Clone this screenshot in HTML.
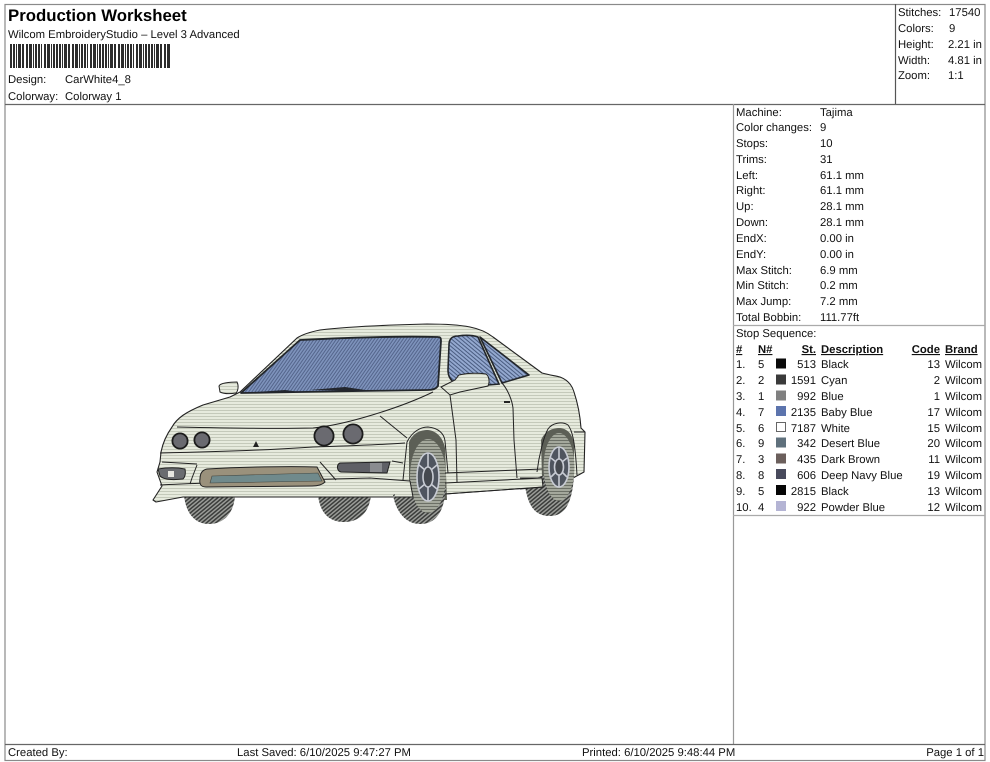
<!DOCTYPE html>
<html><head><meta charset="utf-8">
<style>
html,body{margin:0;padding:0;background:#fff;width:990px;height:762px;overflow:hidden}
svg{display:block;filter:blur(.3px)}
text{font-family:"Liberation Sans",sans-serif;font-size:11.3px;fill:#111;text-rendering:geometricPrecision}
.b{font-weight:bold;text-decoration:underline}
.r{text-anchor:end}
</style></head><body>
<svg width="990" height="762" viewBox="0 0 990 762" xmlns="http://www.w3.org/2000/svg">
<defs>
<filter id="soft" x="-5%" y="-5%" width="110%" height="110%"><feGaussianBlur stdDeviation=".35"/></filter>
<pattern id="body" width="3" height="3" patternUnits="userSpaceOnUse">
<rect width="3" height="3" fill="#e6eadd"/><rect y="2" width="3" height="1" fill="#c4c9ba"/>
</pattern>
<pattern id="glass" width="2.6" height="2.6" patternUnits="userSpaceOnUse" patternTransform="rotate(-55)">
<rect width="2.6" height="2.6" fill="#7f94bd"/><rect y="1.6" width="2.6" height="1" fill="#52648a"/>
</pattern>
<pattern id="glass2" width="3" height="3" patternUnits="userSpaceOnUse" patternTransform="rotate(40)">
<rect width="3" height="3" fill="#93a8cf"/><rect y="2" width="3" height="1" fill="#4a5b80"/>
</pattern>
<pattern id="tire" width="3" height="3" patternUnits="userSpaceOnUse" patternTransform="rotate(-40)">
<rect width="3" height="3" fill="#9a9c98"/><rect y="1.5" width="3" height="1.5" fill="#3a3c3a"/>
</pattern>
<pattern id="tire2" width="3" height="3" patternUnits="userSpaceOnUse">
<rect width="3" height="3" fill="#a4a89c"/><rect y="2" width="3" height="1" fill="#6c7066"/>
</pattern>
</defs>

<!-- frame -->
<g stroke="#8a8a8a" stroke-width="1.2" fill="none">
<rect x="5" y="4.5" width="980" height="756"/>
<line x1="5" y1="104.5" x2="985" y2="104.5" stroke="#666"/>
<line x1="895.5" y1="4" x2="895.5" y2="104" stroke="#555"/>
<line x1="733.5" y1="104" x2="733.5" y2="744" stroke="#999"/>
<line x1="5" y1="744.5" x2="985" y2="744.5" stroke="#666"/>
<line x1="733" y1="325.5" x2="985" y2="325.5" stroke="#aaa"/>
<line x1="733" y1="515.5" x2="985" y2="515.5" stroke="#aaa"/>
</g>

<!-- header -->
<text x="8" y="21" style="font-size:16.8px;font-weight:bold;fill:#000">Production Worksheet</text>
<text x="8" y="38">Wilcom EmbroideryStudio – Level 3 Advanced</text>
<line x1="10" y1="56" x2="170" y2="56" stroke="#2c2c2c" stroke-width="24" stroke-dasharray="2 1 2 1 1 1 3 1 2 2 2 1 3 1 1 1 2 1 2 1 1 2 2 1 3 1 1 1 2 1"/>
<text x="8" y="83">Design:</text><text x="65" y="83">CarWhite4_8</text>
<text x="8" y="100">Colorway:</text><text x="65" y="100">Colorway 1</text>

<text x="898" y="16">Stitches:</text><text x="949" y="16">17540</text>
<text x="898" y="32">Colors:</text><text x="949" y="32">9</text>
<text x="898" y="48">Height:</text><text x="948" y="48">2.21 in</text>
<text x="898" y="64">Width:</text><text x="948" y="64">4.81 in</text>
<text x="898" y="79">Zoom:</text><text x="948" y="79">1:1</text>

<!-- machine info -->
<text x="736" y="116">Machine:</text><text x="820" y="116">Tajima</text>
<text x="736" y="131">Color changes:</text><text x="820" y="131">9</text>
<text x="736" y="147">Stops:</text><text x="820" y="147">10</text>
<text x="736" y="163">Trims:</text><text x="820" y="163">31</text>
<text x="736" y="179">Left:</text><text x="820" y="179">61.1 mm</text>
<text x="736" y="194">Right:</text><text x="820" y="194">61.1 mm</text>
<text x="736" y="210">Up:</text><text x="820" y="210">28.1 mm</text>
<text x="736" y="226">Down:</text><text x="820" y="226">28.1 mm</text>
<text x="736" y="242">EndX:</text><text x="820" y="242">0.00 in</text>
<text x="736" y="258">EndY:</text><text x="820" y="258">0.00 in</text>
<text x="736" y="274">Max Stitch:</text><text x="820" y="274">6.9 mm</text>
<text x="736" y="289">Min Stitch:</text><text x="820" y="289">0.2 mm</text>
<text x="736" y="305">Max Jump:</text><text x="820" y="305">7.2 mm</text>
<text x="736" y="321">Total Bobbin:</text><text x="820" y="321">111.77ft</text>
<text x="736" y="337">Stop Sequence:</text>

<!-- table head -->
<text x="736" y="353" class="b">#</text><text x="758" y="353" class="b">N#</text>
<text x="816" y="353" class="b r">St.</text><text x="821" y="353" class="b">Description</text>
<text x="940" y="353" class="b r">Code</text><text x="945" y="353" class="b">Brand</text>

<g>
<text x="736" y="368">1.</text><text x="758" y="368">5</text><rect x="776" y="358.5" width="10" height="10" fill="#0a0a0a"/><text x="816" y="368" class="r">513</text><text x="821" y="368">Black</text><text x="940" y="368" class="r">13</text><text x="945" y="368">Wilcom</text>
<text x="736" y="384">2.</text><text x="758" y="384">2</text><rect x="776" y="374.5" width="10" height="10" fill="#3a3a3a"/><text x="816" y="384" class="r">1591</text><text x="821" y="384">Cyan</text><text x="940" y="384" class="r">2</text><text x="945" y="384">Wilcom</text>
<text x="736" y="400">3.</text><text x="758" y="400">1</text><rect x="776" y="390.5" width="10" height="10" fill="#808080"/><text x="816" y="400" class="r">992</text><text x="821" y="400">Blue</text><text x="940" y="400" class="r">1</text><text x="945" y="400">Wilcom</text>
<text x="736" y="416">4.</text><text x="758" y="416">7</text><rect x="776" y="406" width="10" height="10" fill="#5c74ad"/><text x="816" y="416" class="r">2135</text><text x="821" y="416">Baby Blue</text><text x="940" y="416" class="r">17</text><text x="945" y="416">Wilcom</text>
<text x="736" y="432">5.</text><text x="758" y="432">6</text><rect x="776.5" y="422.5" width="9" height="9" fill="#fff" stroke="#666"/><text x="816" y="432" class="r">7187</text><text x="821" y="432">White</text><text x="940" y="432" class="r">15</text><text x="945" y="432">Wilcom</text>
<text x="736" y="447">6.</text><text x="758" y="447">9</text><rect x="776" y="437.5" width="10" height="10" fill="#5f707c"/><text x="816" y="447" class="r">342</text><text x="821" y="447">Desert Blue</text><text x="940" y="447" class="r">20</text><text x="945" y="447">Wilcom</text>
<text x="736" y="463">7.</text><text x="758" y="463">3</text><rect x="776" y="453.5" width="10" height="10" fill="#6b5f5c"/><text x="816" y="463" class="r">435</text><text x="821" y="463">Dark Brown</text><text x="940" y="463" class="r">11</text><text x="945" y="463">Wilcom</text>
<text x="736" y="479">8.</text><text x="758" y="479">8</text><rect x="776" y="469" width="10" height="10" fill="#484a5c"/><text x="816" y="479" class="r">606</text><text x="821" y="479">Deep Navy Blue</text><text x="940" y="479" class="r">19</text><text x="945" y="479">Wilcom</text>
<text x="736" y="495">9.</text><text x="758" y="495">5</text><rect x="776" y="485" width="10" height="10" fill="#050505"/><text x="816" y="495" class="r">2815</text><text x="821" y="495">Black</text><text x="940" y="495" class="r">13</text><text x="945" y="495">Wilcom</text>
<text x="736" y="511">10.</text><text x="758" y="511">4</text><rect x="776" y="501" width="10" height="10" fill="#b4b4d4"/><text x="816" y="511" class="r">922</text><text x="821" y="511">Powder Blue</text><text x="940" y="511" class="r">12</text><text x="945" y="511">Wilcom</text>
</g>

<!-- footer -->
<text x="8" y="756">Created By:</text>
<text x="237" y="756">Last Saved: 6/10/2025 9:47:27 PM</text>
<text x="582" y="756">Printed: 6/10/2025 9:48:44 PM</text>
<text x="984" y="756" class="r">Page 1 of 1</text>

<!-- CAR -->
<g filter="url(#soft)">
<!-- far wheels -->
<path d="M184 495 C186 515 196 524 209 524 C223 524 234 514 235 495Z" fill="url(#tire)"/>
<path d="M318 495 C320 514 330 522 344 522 C358 522 369 514 371 495Z" fill="url(#tire)"/>

<!-- body -->
<path d="M153 500 L162 486 L157 472 L160 462 L161 452 C163 442 167 434 172 427 C177 418 186 412 203 405 L230 397 L240 392 L297 338 C303 334 310 332 320 330 C345 327 385 325 427 324 C445 324 460 325 470 327 C480 329 488 333 493 337 L542 373 C550 375 556 376 560 377 C568 380 572 385 574 392 C578 404 580 414 581 428 L585 432 L584 472 L573 478 L542 478 L543 487 L445 494 L413 497 L320 497 L183 497 L156 502 Z" fill="url(#body)" stroke="#222" stroke-width="1.1" stroke-linejoin="round"/>

<!-- near front wheel -->
<path d="M409 500 L409 442 C413 433 420 430 428 430 C437 431 443 438 445 448 L447 500Z" fill="#5b5e56"/>
<path d="M393 495 C396 512 406 524 420 524 C436 524 444 512 446 488 L410 488Z" fill="url(#tire)"/>
<ellipse cx="428" cy="476" rx="18" ry="37" fill="url(#tire2)"/>
<path d="M395 481 L410 481 L413 497 L395 497Z" fill="url(#body)"/>
<path d="M410 481 L413 497 L395 497" fill="none" stroke="#222" stroke-width="1"/>
<!-- near rear wheel -->
<path d="M542 478 L541 440 C545 431 552 428 560 428 C569 429 573 436 574 445 L574 478Z" fill="#5b5e56"/>
<path d="M525 486 C528 505 534 516 550 516 C564 516 572 505 574 476 L540 476Z" fill="url(#tire)"/>
<ellipse cx="559" cy="467" rx="15.5" ry="34" fill="url(#tire2)"/>
<path d="M520 478 L542 478 L543 487 L520 489Z" fill="url(#body)"/>
<path d="M520 489 L543 487 L542 478 L520 478" fill="none" stroke="#222" stroke-width="1"/>
<!-- rims -->
<g fill="#50545e" stroke="#c8ccd4" stroke-width="1.6">
<ellipse cx="428" cy="477" rx="11" ry="24"/>
<ellipse cx="428" cy="477" rx="5" ry="10" fill="#45484f"/>
<path d="M428 453V467M428 487V501M419 465L425 470M437 465L431 470M419 489L425 484M437 489L431 484" fill="none"/>
<ellipse cx="559" cy="467" rx="10" ry="20"/>
<ellipse cx="559" cy="467" rx="4.5" ry="8" fill="#45484f"/>
<path d="M559 447V459M559 475V487M551 458L556 462M567 458L562 462M551 477L556 472M567 477L562 472" fill="none"/>
</g>

<!-- windshield -->
<path d="M241 393 L300 340 C340 338 400 336 438 337 C441 337 441 339 441 341 L438 386 C436 389 432 390 428 390 L360 391 L300 392 Z" fill="url(#glass)" stroke="#22252c" stroke-width="1.8" stroke-linejoin="round"/>
<path d="M243 393 L285 390 L300 392Z M310 390 L345 387 L372 391Z" fill="#23262d"/>
<!-- side windows -->
<path d="M449 345 C449 339 452 336 458 336 C465 335 472 335 478 337 L499 384 L488 385 L455 383 C450 380 448 375 448 370Z" fill="url(#glass2)" stroke="#22252c" stroke-width="1.6"/>
<path d="M480 337 L529 375 L502 383Z" fill="url(#glass2)" stroke="#22252c" stroke-width="1.6" stroke-linejoin="round"/>
<!-- mirrors -->
<path d="M441 387 L455 380 L459 375 C468 373 478 373 486 374 C489 376 490 382 488 386 L460 392 L450 395Z" fill="url(#body)" stroke="#222" stroke-width="1"/>
<path d="M219 386 C220 383 230 382 237 382 C239 386 238 391 236 393 C230 394 224 394 220 392Z" fill="url(#body)" stroke="#222" stroke-width="1"/>

<!-- body lines -->
<g fill="none" stroke="#222" stroke-width="1">
<path d="M177 427 C220 428 270 429 313 428 C345 425 400 408 433 392"/>
<path d="M160 453 C210 452 270 450 313 447 C345 446 380 445 405 443"/>
<path d="M380 416 L407 438"/>
<path d="M403 480 L407 442 C412 432 420 427 428 427 C438 428 444 433 445 441 L448 473"/>
<path d="M537 472 C539 455 544 436 548 429 C552 423 562 421 568 425 C572 430 575 440 577 475"/>
<path d="M574 432 L585 432"/>
<path d="M450 395 L456 440 L457 482"/>
<path d="M502 383 C508 390 512 400 513 408 L514 440 L517 478"/>
<path d="M445 473 L542 469"/>
<path d="M445 483 L542 478"/>
<path d="M445 494 L543 487"/>
<path d="M160 485 C220 482 300 480 370 478 L410 481"/>
<path d="M392 461 L403 463"/>
<path d="M197 465 L192 478 L190 484"/>
<path d="M320 462 L336 480"/>
<path d="M162 462 L197 464"/>
<path d="M504 402 H510" stroke-width="2"/>
</g>

<!-- grille -->
<path d="M207 469 C240 467 290 466 317 467 L325 482 C322 485 318 486 312 486 L206 487 C201 487 199 484 200 479 C200 474 202 470 207 469Z" fill="#9a917c" stroke="#222" stroke-width="1"/>
<path d="M212 476 L318 473 L322 481 L210 483Z" fill="#6f8a8c" stroke="#44463f" stroke-width=".6"/>
<!-- right fog -->
<path d="M340 463 L390 462 L387 473 L341 472 C337 471 336 465 340 463Z" fill="#5e6066" stroke="#222" stroke-width="1"/>
<path d="M370 463h12v9h-12z" fill="#8a8c90"/>
<!-- left fog -->
<path d="M158 469 C170 467 180 468 185 469 C186 474 185 477 183 479 C174 480 164 480 160 476Z" fill="#6a6c70" stroke="#222" stroke-width="1"/>
<rect x="168" y="471" width="6" height="6" fill="#e6e6e0"/>
<!-- headlights -->
<g fill="#6a6b70" stroke="#1c1c1c" stroke-width="1.8">
<circle cx="180" cy="441" r="7.6"/><circle cx="202" cy="440" r="7.6"/>
<circle cx="324" cy="436" r="9.6"/><circle cx="353" cy="434" r="9.6"/>
</g>
<path d="M256 441 L259 447 L253 447Z" fill="#222"/>
</g>
</svg>
</body></html>
